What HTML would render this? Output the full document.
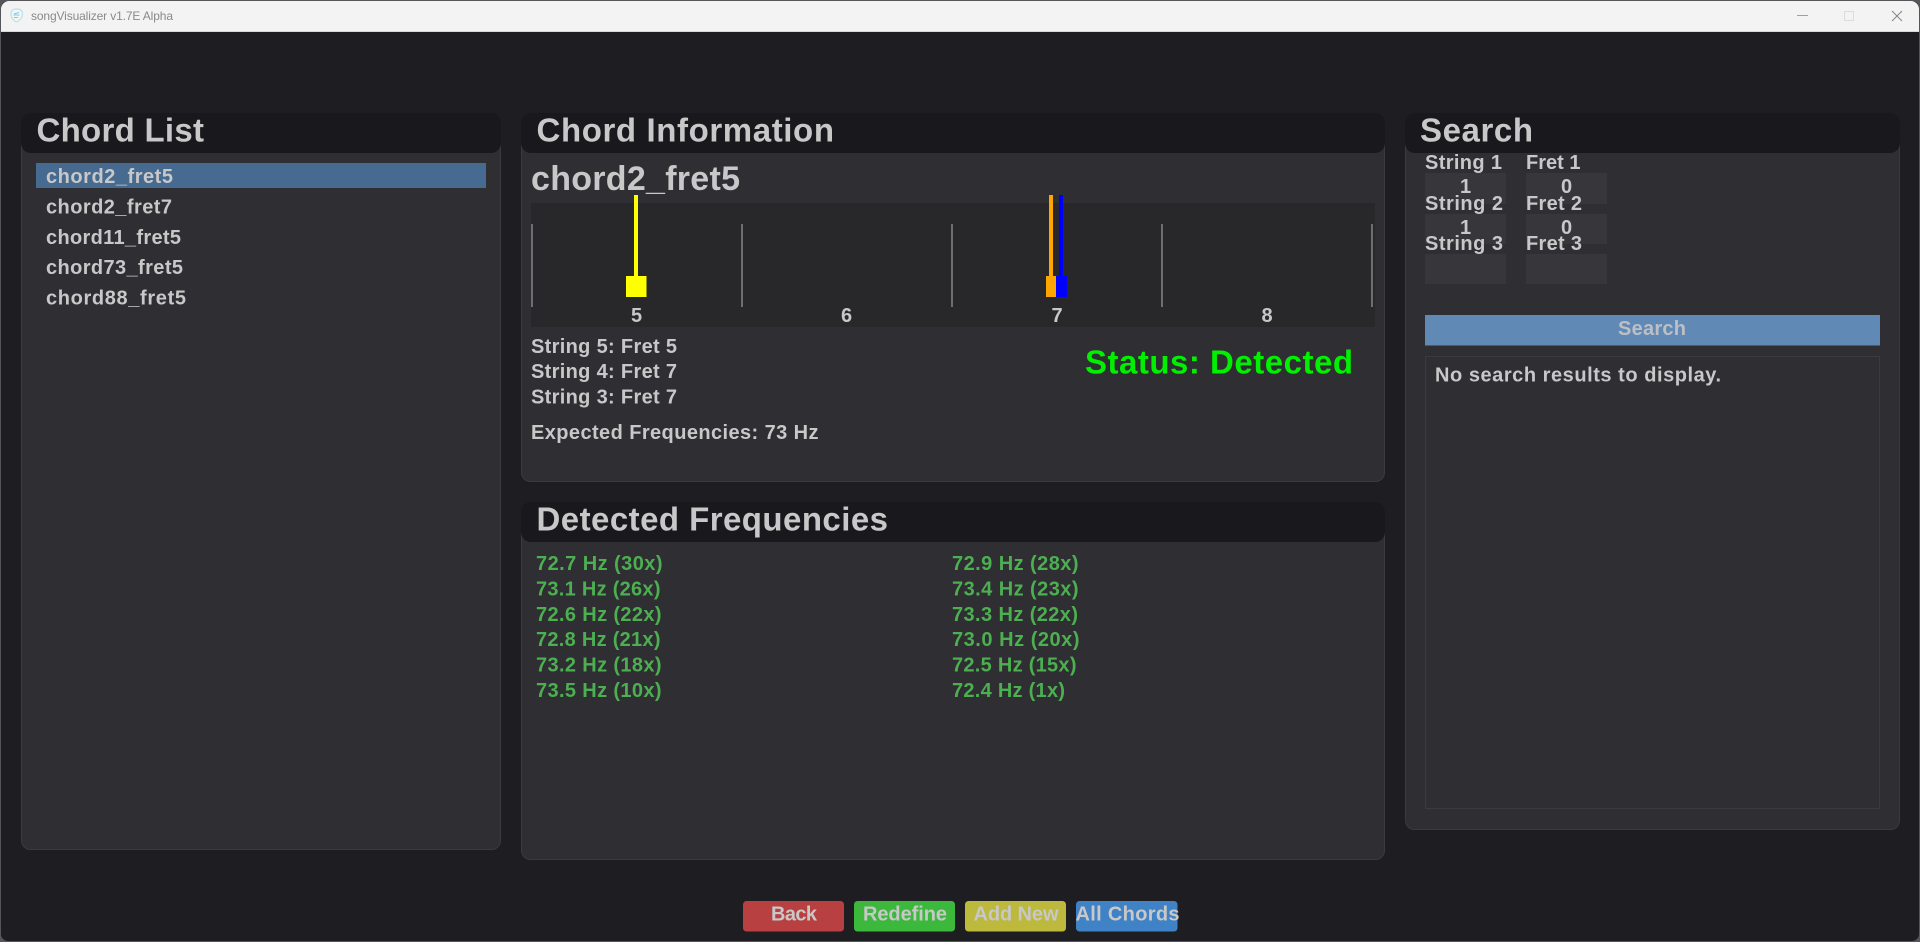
<!DOCTYPE html>
<html><head><meta charset="utf-8"><title>songVisualizer v1.7E Alpha</title>
<style>
html,body{margin:0;padding:0;width:1920px;height:942px;overflow:hidden;background:#1e1e22}
svg{display:block}
text{font-family:"Liberation Sans",sans-serif;font-weight:700;font-size:20px;fill:#c8c8c8}
.h{font-size:33px}
.g{fill:#4caf50}
.t{font-weight:400;font-size:12px;fill:#8a8a8a}
</style></head><body>
<svg width="1920" height="942" viewBox="0 0 1920 942" xmlns="http://www.w3.org/2000/svg">
<rect width="1920" height="942" fill="#55555a"/>
<rect x="1" y="1" width="1918" height="940" rx="7" fill="#1e1e22"/>
<path d="M1 32V9a8 8 0 0 1 8-8H1911a8 8 0 0 1 8 8V32Z" fill="#f3f3f3"/>
<rect x="1" y="31" width="1918" height="1" fill="#d8d8d8"/>
<path d="M16.500 9C13 9 11 10 11 14C11 18 14 21 16.500 22C19 21 22.500 18 22.500 14C22.500 10 20 9 16.500 9Z" fill="#f4f6f4" stroke="#b5e3ea" stroke-width="1.200"/>
<path d="M13.500 15H19.500M19 12.500L14 14M14 17.500H18" fill="none" stroke="#8cc4e4" stroke-width="1"/>
<text class="t" x="31" y="20" textLength="142">songVisualizer v1.7E Alpha</text>
<rect x="1797" y="15" width="11" height="1" fill="#a0a0a0"/>
<rect x="1844.500" y="11.500" width="9" height="9" fill="none" stroke="#dcdcdc"/>
<path d="M1892 11L1902 21M1902 11L1892 21" stroke="#858585" stroke-width="1" fill="none"/>

<!-- Chord List -->
<rect x="21.500" y="114.500" width="479" height="735" rx="9" fill="#2e2e33" stroke="#3a3a40"/>
<rect x="21" y="113" width="480" height="40" rx="10" fill="#19191d"/>
<text class="h" x="36.500" y="141.500" textLength="167.500">Chord List</text>
<rect x="36" y="163" width="450" height="25" fill="#466a90"/>
<text x="46" y="183" textLength="127">chord2_fret5</text>
<text x="46" y="213.500" textLength="126">chord2_fret7</text>
<text x="46" y="244" textLength="135">chord11_fret5</text>
<text x="46" y="274" textLength="137">chord73_fret5</text>
<text x="46" y="304.500" textLength="140">chord88_fret5</text>

<!-- Chord Information -->
<rect x="521.500" y="114.500" width="863" height="367" rx="9" fill="#2e2e33" stroke="#3a3a40"/>
<rect x="521" y="113" width="864" height="40" rx="10" fill="#19191d"/>
<text class="h" x="536.500" y="141.500" textLength="297.500">Chord Information</text>
<text class="h" x="531" y="190" style="font-size:34px" textLength="209">chord2_fret5</text>
<rect x="531" y="203" width="844" height="124" fill="#28282a"/>
<g fill="#6e6e6e">
<rect x="531" y="224" width="2" height="83"/>
<rect x="741" y="224" width="2" height="83"/>
<rect x="951" y="224" width="2" height="83"/>
<rect x="1161" y="224" width="2" height="83"/>
<rect x="1371" y="224" width="2" height="83"/>
</g>
<rect x="634" y="195" width="4" height="82" fill="#ffff00"/>
<rect x="626" y="276" width="20.500" height="21" fill="#ffff00"/>
<rect x="1049" y="195" width="4" height="82" fill="#ffa500"/>
<rect x="1046" y="276" width="10" height="21" fill="#ffa500"/>
<rect x="1059" y="195" width="4" height="82" fill="#0000ff"/>
<rect x="1056" y="276" width="11" height="21" fill="#0000ff"/>
<text x="636.500" y="322" text-anchor="middle">5</text>
<text x="846.500" y="322" text-anchor="middle">6</text>
<text x="1057" y="322" text-anchor="middle">7</text>
<text x="1267" y="322" text-anchor="middle">8</text>
<text x="531" y="353" textLength="146">String 5: Fret 5</text>
<text x="531" y="378" textLength="146">String 4: Fret 7</text>
<text x="531" y="403.500" textLength="146">String 3: Fret 7</text>
<text x="531" y="439" textLength="287.500">Expected Frequencies: 73 Hz</text>
<text x="1085" y="373.500" style="font-size:33px;fill:#00f000" textLength="268">Status: Detected</text>

<!-- Detected Frequencies -->
<rect x="521.500" y="503.500" width="863" height="356" rx="9" fill="#2e2e33" stroke="#3a3a40"/>
<rect x="521" y="502" width="864" height="40" rx="10" fill="#19191d"/>
<text class="h" x="536.500" y="530.500" textLength="351.500">Detected Frequencies</text>
<text class="g" x="536" y="570" textLength="126.500">72.7 Hz (30x)</text>
<text class="g" x="536" y="595.500" textLength="124.500">73.1 Hz (26x)</text>
<text class="g" x="536" y="621" textLength="125.500">72.6 Hz (22x)</text>
<text class="g" x="536" y="646" textLength="124.500">72.8 Hz (21x)</text>
<text class="g" x="536" y="671.500" textLength="125.500">73.2 Hz (18x)</text>
<text class="g" x="536" y="697" textLength="125.500">73.5 Hz (10x)</text>
<text class="g" x="952" y="570" textLength="126.500">72.9 Hz (28x)</text>
<text class="g" x="952" y="595.500" textLength="126.500">73.4 Hz (23x)</text>
<text class="g" x="952" y="621" textLength="126">73.3 Hz (22x)</text>
<text class="g" x="952" y="646" textLength="127.500">73.0 Hz (20x)</text>
<text class="g" x="952" y="671.500" textLength="124.500">72.5 Hz (15x)</text>
<text class="g" x="952" y="697" textLength="113">72.4 Hz (1x)</text>

<!-- Search -->
<rect x="1405.500" y="114.500" width="494" height="715" rx="9" fill="#2e2e33" stroke="#3a3a40"/>
<rect x="1405" y="113" width="495" height="40" rx="10" fill="#19191d"/>
<text class="h" x="1420" y="141.500" textLength="113">Search</text>
<g fill="#36363b">
<rect x="1425" y="173" width="81" height="31"/><rect x="1526" y="173" width="81" height="31"/>
<rect x="1425" y="214" width="81" height="30"/><rect x="1526" y="214" width="81" height="30"/>
<rect x="1425" y="254" width="81" height="30"/><rect x="1526" y="254" width="81" height="30"/>
</g>
<text x="1465.500" y="193" text-anchor="middle">1</text>
<text x="1566.500" y="193" text-anchor="middle">0</text>
<text x="1465.500" y="234" text-anchor="middle">1</text>
<text x="1566.500" y="234" text-anchor="middle">0</text>
<text x="1425" y="169" textLength="77">String 1</text>
<text x="1526" y="169" textLength="54.500">Fret 1</text>
<text x="1425" y="210" textLength="78">String 2</text>
<text x="1526" y="210" textLength="56">Fret 2</text>
<text x="1425" y="250" textLength="78">String 3</text>
<text x="1526" y="250" textLength="56">Fret 3</text>
<rect x="1425" y="315" width="455" height="30.500" fill="#6089b5"/>
<text x="1652" y="335" text-anchor="middle" style="fill:#bcbfc4" textLength="68">Search</text>
<rect x="1425.500" y="356.500" width="454" height="452" fill="#2e2e33" stroke="#3a3a40"/>
<text x="1435" y="381.500" textLength="286">No search results to display.</text>

<!-- Buttons -->
<rect x="743" y="901" width="101" height="30.500" rx="3.500" fill="#b84040"/>
<rect x="854" y="901" width="101" height="30.500" rx="3.500" fill="#3cb93c"/>
<rect x="965" y="901" width="101" height="30.500" rx="3.500" fill="#bcb93c"/>
<rect x="1076" y="901" width="101.500" height="30.500" rx="3.500" fill="#3f82c6"/>
<text x="771" y="920.500" textLength="46">Back</text>
<text x="863" y="920.500" textLength="84">Redefine</text>
<text x="973.500" y="920.500" textLength="85">Add New</text>
<text x="1075.500" y="920.500" textLength="104">All Chords</text>
</svg>
</body></html>
